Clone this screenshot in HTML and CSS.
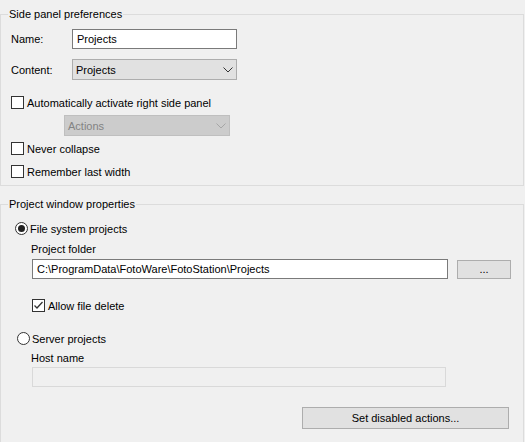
FILE: index.html
```html
<!DOCTYPE html>
<html>
<head>
<meta charset="utf-8">
<link rel="stylesheet" href="styles.css">
</head>
<body>
<fieldset class="group group-side">
  <legend>Side panel preferences</legend>
  <div class="row row-name">
    <span class="lbl">Name:</span>
    <div class="textbox w165">Projects</div>
  </div>
  <div class="row row-content">
    <span class="lbl">Content:</span>
    <div class="combo w165">
      <span>Projects</span>
      <svg class="chev" width="10" height="6" viewBox="0 0 10 6"><path d="M0.5 0.5 L5 5 L9.5 0.5" fill="none" stroke="#333" stroke-width="1"/></svg>
    </div>
  </div>
  <div class="row check-row r-auto">
    <span class="check"></span><span>Automatically activate right side panel</span>
  </div>
  <div class="row r-actions">
    <div class="combo disabled w166">
      <span>Actions</span>
      <svg class="chev" width="10" height="6" viewBox="0 0 10 6"><path d="M0.5 0.5 L5 5 L9.5 0.5" fill="none" stroke="#a6a6a6" stroke-width="1"/></svg>
    </div>
  </div>
  <div class="row check-row r-never">
    <span class="check"></span><span>Never collapse</span>
  </div>
  <div class="row check-row r-remember">
    <span class="check"></span><span>Remember last width</span>
  </div>
</fieldset>

<fieldset class="group group-project">
  <legend>Project window properties</legend>
  <div class="row check-row r-fs">
    <span class="radio on"></span><span>File system projects</span>
  </div>
  <div class="sublabel r-folder-lbl">Project folder</div>
  <div class="row r-folder">
    <div class="textbox w416">C:\ProgramData\FotoWare\FotoStation\Projects</div>
    <div class="button b-dots">...</div>
  </div>
  <div class="row check-row r-allow">
    <span class="check checked"><svg width="11" height="11" viewBox="0 0 11 11"><path d="M1.5 5.5 L4 8 L9.5 2" fill="none" stroke="#333" stroke-width="1.3"/></svg></span><span>Allow file delete</span>
  </div>
  <div class="row check-row r-server">
    <span class="radio"></span><span>Server projects</span>
  </div>
  <div class="sublabel r-host-lbl">Host name</div>
  <div class="row r-host">
    <div class="textbox disabled w414"></div>
  </div>
  <div class="row r-set">
    <div class="button b-set">Set disabled actions...</div>
  </div>
</fieldset>
</body>
</html>
```
FILE: styles.css
```css
html, body {
  margin: 0;
  padding: 0;
  background: #f0f0f0;
  overflow: hidden;
}
body {
  font-family: "Liberation Sans", Arial, sans-serif;
  font-size: 11px;
  color: #000;
  width: 525px;
  height: 442px;
  display: flex;
  flex-direction: column;
}
.group {
  margin: 0;
  padding: 0 0 0 10px;
  border: 1px solid #dcdcdc;
  width: 512px;
  box-sizing: content-box;
  min-width: 0;
}
.group legend {
  padding: 0 1px;
  margin-left: -3px;
  line-height: 15px;
  height: 15px;
  font-size: 11px;
}
.group-side {
  margin-top: 7px;
  padding-bottom: 6px;
  flex: none;
}
.group-project {
  margin-top: 11px;
  flex: 1;
  border-bottom: 0;
}
.row {
  display: flex;
  align-items: center;
}
.lbl {
  width: 61px;
}
.textbox {
  box-sizing: border-box;
  height: 20px;
  border: 1px solid #7a7a7a;
  background: #fff;
  padding: 0 4px;
  line-height: 18px;
  white-space: nowrap;
  overflow: hidden;
}
.textbox.disabled {
  border-color: #d9d9d9;
  background: #f0f0f0;
}
.w165 { width: 165px; }
.w166 { width: 166px; }
.w416 { width: 416px; }
.w414 { width: 414px; }
.combo {
  box-sizing: border-box;
  height: 21px;
  border: 1px solid #adadad;
  background: #e1e1e1;
  display: flex;
  align-items: center;
  justify-content: space-between;
  padding: 0 3px 0 3px;
}
.combo.disabled {
  background: #cccccc;
  border-color: #bfbfbf;
  color: #838383;
}
.chev { display: block; }
.row-name { margin-top: 7px; height: 20px; }
.row-content { margin-top: 10px; height: 21px; }
.check-row { height: 15px; }
.check {
  box-sizing: border-box;
  width: 13px;
  height: 13px;
  border: 1px solid #333;
  background: #fff;
  margin-right: 3px;
  display: flex;
  align-items: center;
  justify-content: center;
}
.radio {
  box-sizing: border-box;
  width: 13px;
  height: 13px;
  border: 1px solid #333;
  border-radius: 50%;
  background: #fff;
  margin-right: 2px;
  display: flex;
  align-items: center;
  justify-content: center;
}
.radio.on::after {
  content: "";
  width: 7px;
  height: 7px;
  border-radius: 50%;
  background: #222;
}
.r-auto { margin-top: 15px; }
.r-actions { margin-top: 5px; margin-left: 53px; height: 21px; }
.r-never { margin-top: 5px; }
.r-remember { margin-top: 8px; }

.r-fs { margin-top: 9px; margin-left: 4px; }
.sublabel { line-height: 15px; margin-left: 20px; }
.r-folder-lbl { margin-top: 6px; }
.r-folder { margin-top: 2px; margin-left: 21px; height: 20px; }
.button {
  box-sizing: border-box;
  border: 1px solid #adadad;
  background: #e1e1e1;
  display: flex;
  align-items: center;
  justify-content: center;
}
.b-dots { width: 54px; height: 19px; margin-left: 9px; }
.r-allow { margin-top: 19px; margin-left: 21px; }
.r-server { margin-top: 18px; margin-left: 6px; }
.r-host-lbl { margin-top: 5px; }
.r-host { margin-top: 1px; margin-left: 21px; height: 20px; }
.r-set { margin-top: 20px; margin-left: 291px; }
.b-set { width: 207px; height: 22px; }
```
